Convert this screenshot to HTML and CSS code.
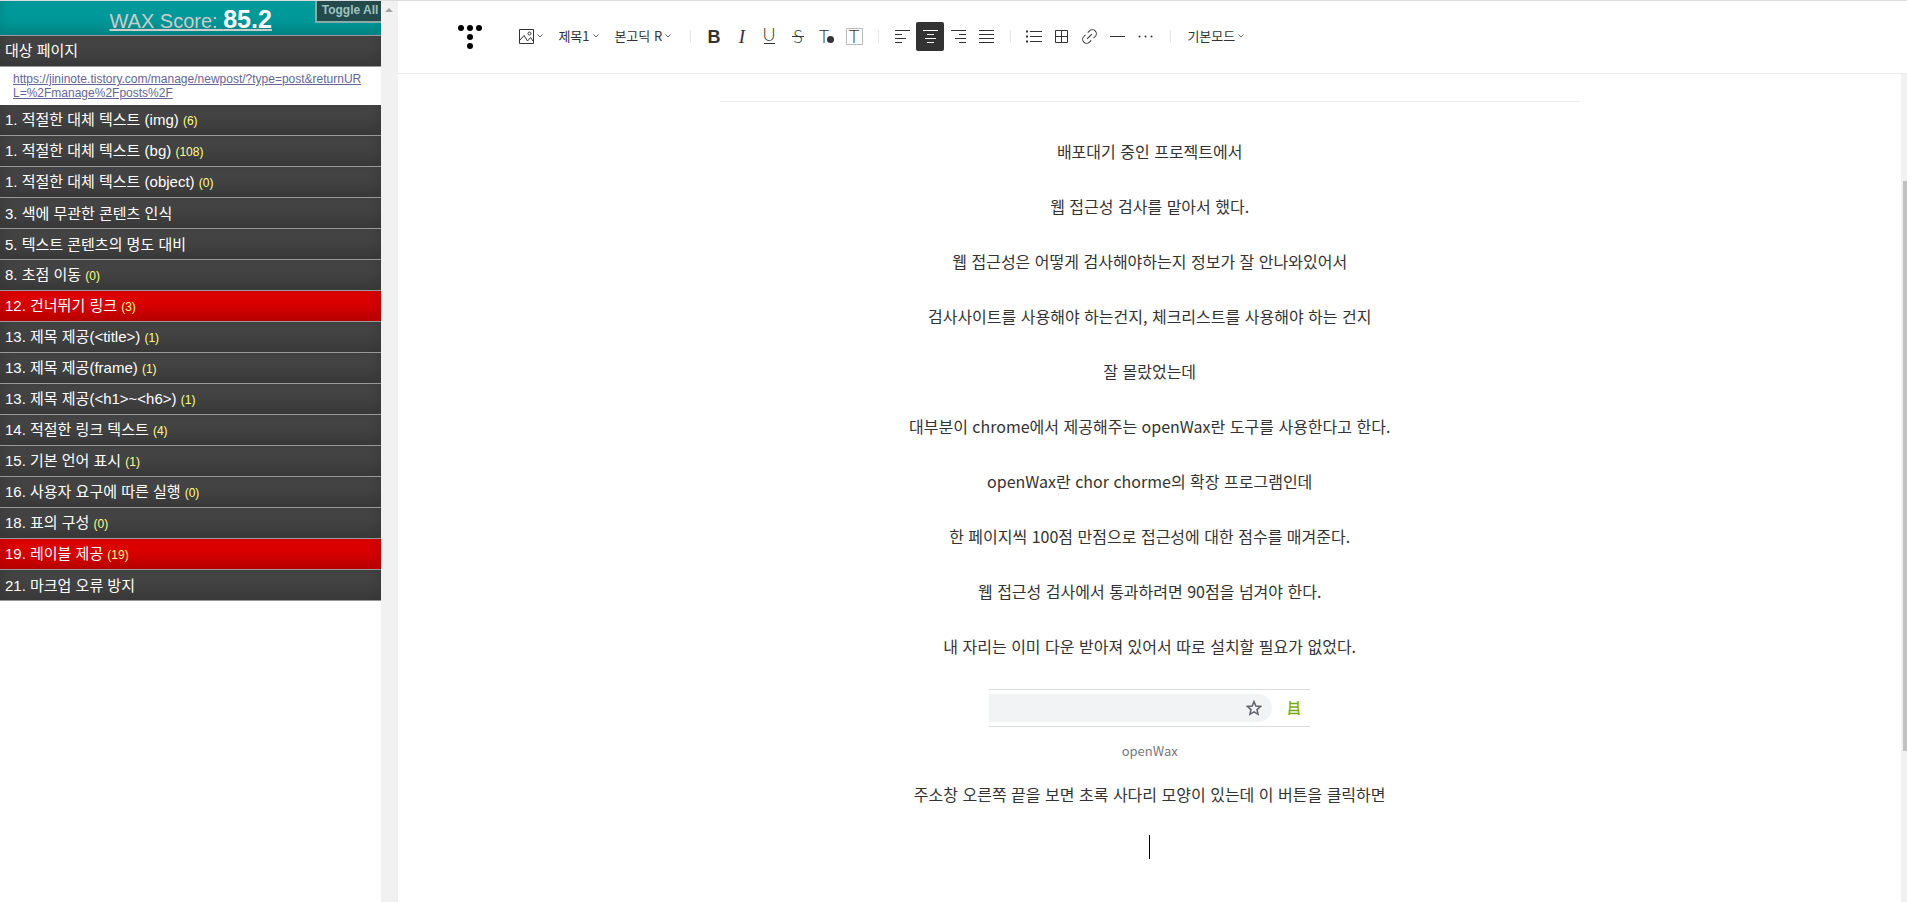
FILE: index.html
```html
<!DOCTYPE html>
<html lang="ko">
<head>
  <meta charset="UTF-8">
  <meta name="viewport" content="width=device-width, initial-scale=1.0">
  <title>글쓰기</title>
  <link rel="stylesheet" href="styles.css">
</head>
<body>
<aside class="wax">
  <header class="wax-score">
    <a href="#score">WAX Score: <strong>85.2</strong></a>
    <button type="button" class="toggle-all">Toggle All</button>
  </header>
  <h2 class="wax-target">대상 페이지</h2>
  <p class="wax-url"><a href="#page">https://jininote.tistory.com/manage/newpost/?type=post&amp;returnURL=%2Fmanage%2Fposts%2F</a></p>
  <ul class="wax-list">
    <li><button type="button">1. 적절한 대체 텍스트 (img) <em>(6)</em></button></li>
    <li><button type="button">1. 적절한 대체 텍스트 (bg) <em>(108)</em></button></li>
    <li><button type="button">1. 적절한 대체 텍스트 (object) <em>(0)</em></button></li>
    <li><button type="button">3. 색에 무관한 콘텐츠 인식</button></li>
    <li><button type="button">5. 텍스트 콘텐츠의 명도 대비</button></li>
    <li><button type="button">8. 초점 이동 <em>(0)</em></button></li>
    <li><button type="button" class="fail">12. 건너뛰기 링크 <em>(3)</em></button></li>
    <li><button type="button">13. 제목 제공(&lt;title&gt;) <em>(1)</em></button></li>
    <li><button type="button">13. 제목 제공(frame) <em>(1)</em></button></li>
    <li><button type="button">13. 제목 제공(&lt;h1&gt;~&lt;h6&gt;) <em>(1)</em></button></li>
    <li><button type="button">14. 적절한 링크 텍스트 <em>(4)</em></button></li>
    <li><button type="button">15. 기본 언어 표시 <em>(1)</em></button></li>
    <li><button type="button">16. 사용자 요구에 따른 실행 <em>(0)</em></button></li>
    <li><button type="button">18. 표의 구성 <em>(0)</em></button></li>
    <li><button type="button" class="fail">19. 레이블 제공 <em>(19)</em></button></li>
    <li><button type="button">21. 마크업 오류 방지</button></li>
  </ul>
</aside>
<div class="side-scroll">
  <svg width="17" height="17" viewBox="0 0 17 17"><path d="M4 11h8L8 7z" fill="#a3a3a3"/></svg>
</div>

<main class="editor">
  <div class="toolbar">
    <a href="#home" class="logo" aria-label="Tistory">
      <svg width="24" height="29" viewBox="0 0 24 29">
        <circle cx="3" cy="6" r="3"/><circle cx="12" cy="6" r="3"/><circle cx="21" cy="6" r="3"/>
        <circle cx="12" cy="15" r="3"/><circle cx="12" cy="24" r="3"/>
      </svg>
    </a>

    <button type="button" class="drop" aria-label="첨부">
      <svg width="15" height="15" viewBox="0 0 15 15" class="line">
        <path d="M.5.5h14v14H.5zM1 11l4-4.500 3.500 5.500 3-3.500L14 12"/><circle cx="10.500" cy="4.500" r="1.500"/>
      </svg>
      <svg class="chevron" width="6" height="4" viewBox="0 0 6 4"><path d="M.5.5L3 3 5.500.5"/></svg>
    </button>
    <label class="drop">
      <select aria-label="문단 모양"><option>제목1</option></select>
      <svg class="chevron" width="6" height="4" viewBox="0 0 6 4"><path d="M.5.5L3 3 5.500.5"/></svg>
    </label>
    <label class="drop">
      <select aria-label="글꼴"><option>본고딕 R</option></select>
      <svg class="chevron" width="6" height="4" viewBox="0 0 6 4"><path d="M.5.5L3 3 5.500.5"/></svg>
    </label>

    <span class="divider"></span>
    <button type="button" class="tool" aria-label="굵게">
      <svg width="28" height="29" viewBox="0 0 28 29"><text class="bold" x="14" y="21">B</text></svg>
    </button>
    <button type="button" class="tool" aria-label="기울임">
      <svg width="28" height="29" viewBox="0 0 28 29"><text class="italic" x="14" y="21">I</text></svg>
    </button>
    <button type="button" class="tool" aria-label="밑줄">
      <svg width="28" height="29" viewBox="0 0 28 29" class="line"><text class="thin" x="13" y="19">U</text><path d="M8 21.500h11"/></svg>
    </button>
    <button type="button" class="tool" aria-label="취소선">
      <svg width="28" height="29" viewBox="0 0 28 29" class="line"><text class="thin" x="14" y="21">S</text><path d="M8 14.500h12"/></svg>
    </button>
    <button type="button" class="tool" aria-label="글자색">
      <svg width="28" height="29" viewBox="0 0 28 29"><text class="thin" x="12" y="21">T</text><circle cx="18.500" cy="17.500" r="3.500" fill="#333"/></svg>
    </button>
    <button type="button" class="tool" aria-label="배경색">
      <svg width="28" height="29" viewBox="0 0 28 29"><path d="M6.500 6.500h16v16h-16z" fill="none" stroke="#bbb"/><text class="thin" x="14" y="21">T</text></svg>
    </button>

    <span class="divider"></span>
    <button type="button" class="tool" aria-label="왼쪽 정렬">
      <svg width="28" height="29" viewBox="0 0 28 29" class="line"><path d="M7 8.500h15M7 12.500h7M7 16.500h11M7 20.500h7"/></svg>
    </button>
    <button type="button" class="tool on" aria-label="가운데 정렬" aria-pressed="true">
      <svg width="28" height="29" viewBox="0 0 28 29" class="line"><path d="M7 8.500h15M11 12.500h7M9 16.500h11M11 20.500h7"/></svg>
    </button>
    <button type="button" class="tool" aria-label="오른쪽 정렬">
      <svg width="28" height="29" viewBox="0 0 28 29" class="line"><path d="M7 8.500h15M15 12.500h7M11 16.500h11M15 20.500h7"/></svg>
    </button>
    <button type="button" class="tool" aria-label="양쪽 정렬">
      <svg width="28" height="29" viewBox="0 0 28 29" class="line"><path d="M7 8.500h15M7 12.500h15M7 16.500h15M7 20.500h15"/></svg>
    </button>

    <span class="divider"></span>
    <button type="button" class="tool" aria-label="목록">
      <svg width="28" height="29" viewBox="0 0 28 29" class="line"><path d="M10 9.500h12M10 14.500h12M10 19.500h12"/><path stroke-width="2" d="M6 9.500h2M6 14.500h2M6 19.500h2"/></svg>
    </button>
    <button type="button" class="tool" aria-label="표">
      <svg width="28" height="29" viewBox="0 0 28 29" class="line"><path d="M7.500 8.500h12v12h-12zM13.500 8v13M7 14.500h13"/></svg>
    </button>
    <button type="button" class="tool" aria-label="링크">
      <svg width="28" height="29" viewBox="0 0 28 29" class="line">
        <g transform="rotate(-45 13.500 14.500)"><path d="M12 10.500H9.500a4 4 0 0 0 0 8H12M15 10.500h2.500a4 4 0 0 1 0 8H15M10 14.500h7"/></g>
      </svg>
    </button>
    <button type="button" class="tool" aria-label="구분선">
      <svg width="28" height="29" viewBox="0 0 28 29" class="line"><path d="M6 14.500h15"/></svg>
    </button>
    <button type="button" class="tool" aria-label="더보기">
      <svg width="28" height="29" viewBox="0 0 28 29"><g fill="#333"><circle cx="7.500" cy="14.500" r="1"/><circle cx="13.500" cy="14.500" r="1"/><circle cx="19.500" cy="14.500" r="1"/></g></svg>
    </button>

    <span class="divider"></span>
    <label class="drop mode">
      <select aria-label="편집 모드"><option>기본모드</option></select>
      <svg class="chevron" width="6" height="4" viewBox="0 0 6 4"><path d="M.5.5L3 3 5.500.5"/></svg>
    </label>
  </div>

  <div class="document">
    <article class="post">
      <hr>
      <p>배포대기 중인 프로젝트에서</p>
      <p>웹 접근성 검사를 맡아서 했다.</p>
      <p>웹 접근성은 어떻게 검사해야하는지 정보가 잘 안나와있어서</p>
      <p>검사사이트를 사용해야 하는건지, 체크리스트를 사용해야 하는 건지</p>
      <p>잘 몰랐었는데</p>
      <p>대부분이 chrome에서 제공해주는 openWax란 도구를 사용한다고 한다.</p>
      <p>openWax란 chor chorme의 확장 프로그램인데</p>
      <p>한 페이지씩 100점 만점으로 접근성에 대한 점수를 매겨준다.</p>
      <p>웹 접근성 검사에서 통과하려면 90점을 넘겨야 한다.</p>
      <p>내 자리는 이미 다운 받아져 있어서 따로 설치할 필요가 없었다.</p>
      <figure>
        <div class="browser-bar">
          <div class="address">
            <svg width="16" height="16" viewBox="0 0 16 16"><path d="M8 1.500l1.800 4.500 4.900.4-3.700 3.200 1.100 4.700L8 11.800l-4.100 2.500L5 9.600 1.300 6.400 6.200 6z" fill="none" stroke="#5f6368" stroke-width="1.500"/></svg>
          </div>
          <svg width="14" height="16" viewBox="0 0 14 16">
            <path d="M3 1v6l-1 8M11 1v6l1 8" fill="none" stroke="#9acb35" stroke-width="2"/>
            <path d="M3 3.500h8M3 7h8M2 10.500h10M2 13.500h10" fill="none" stroke="#74a51c" stroke-width="1.500"/>
          </svg>
        </div>
        <figcaption>openWax</figcaption>
      </figure>
      <p>주소창 오른쪽 끝을 보면 초록 사다리 모양이 있는데 이 버튼을 클릭하면</p>
      <p><span class="caret"></span></p>
    </article>
    <div class="doc-scroll"><div class="thumb"></div></div>
  </div>
</main>
</body>
</html>
```
FILE: styles.css
```css
* {
  box-sizing: border-box;
}

body {
  margin: 0;
  height: 100vh;
  display: flex;
  overflow: hidden;
  border-top: 1px solid #dadce0;
  background: #fff;
  color: #333;
  font-family: "Noto Sans CJK KR", "Noto Sans CJK SC", sans-serif;
}

button,
select {
  margin: 0;
  padding: 0;
  border: 0;
  background: none;
  color: inherit;
  font: inherit;
  cursor: pointer;
}

svg {
  display: block;
}

/* openWAX panel */
.wax {
  flex: 0 0 20%;
  font-family: "Liberation Sans", "Noto Sans CJK KR", "Noto Sans CJK SC", sans-serif;
}

.wax-score {
  position: relative;
  height: 35px;
  padding-top: 4px;
  border-bottom: 1px solid #999;
  background: #099;
  box-shadow: inset 0 -8px 12px rgba(0, 0, 0, 0.15);
  text-align: center;
  font-size: 20px;
  line-height: 29px;
}

.wax-score a {
  color: #ccc;
}

.wax-score strong {
  color: #fff;
  font-size: 25px;
}

.toggle-all {
  position: absolute;
  top: 0;
  right: 0;
  height: 22px;
  padding: 0 3px 2px 5px;
  border: 2px solid #8aa;
  border-width: 0 0 2px 2px;
  background: #244a4c;
  color: #9cc4c0;
  font-size: 12px;
  font-weight: bold;
  line-height: 18px;
}

.wax-target,
.wax-list button {
  display: block;
  width: 100%;
  height: 31px;
  margin: 0;
  padding: 0 5px;
  border-bottom: 1px solid #999;
  background: #444;
  box-shadow: inset 0 -8px 16px rgba(0, 0, 0, 0.2);
  color: #fff;
  font-size: 15px;
  font-weight: normal;
  line-height: 29px;
  text-align: left;
}

.wax-list .fail {
  background: #d00;
}

.wax-url {
  margin: 0;
  padding: 5px 16px 5px 13px;
  font-size: 12px;
  line-height: 14px;
  word-break: break-all;
}

.wax-url a {
  color: #669;
}

.wax-list {
  margin: 0;
  padding: 0;
  list-style: none;
}

.wax-list em {
  color: #ff8;
  font-size: 12px;
  font-style: normal;
}

.side-scroll {
  flex: 0 0 17px;
  background: #f1f1f1;
}

/* editor */
.editor {
  flex: 1;
  min-width: 0;
  display: flex;
  flex-direction: column;
}

.toolbar {
  display: flex;
  align-items: center;
  height: 73px;
  padding: 0 0 2px 60px;
  border-bottom: 1px solid #ebebeb;
  font-size: 13px;
}

.logo {
  margin-right: 37px;
}

.drop {
  display: flex;
  align-items: center;
  gap: 3px;
  margin-right: 15px;
}

.drop select {
  appearance: none;
  line-height: 20px;
}

.drop.mode {
  margin-left: 7px;
}

.chevron {
  fill: none;
  stroke: #666;
}

.divider {
  width: 1px;
  height: 13px;
  margin: 0 9px 0 10px;
  background: #e6e6e6;
}

.drop + .divider {
  margin-left: 4px;
}

.tool {
  border-radius: 2px;
}

.tool.on {
  background: #333;
  color: #fff;
}

.line {
  fill: none;
  stroke: currentColor;
}

.tool text {
  fill: #333;
  stroke: none;
  text-anchor: middle;
}

.bold {
  font: bold 18px "Liberation Sans", sans-serif;
}

.italic {
  font: italic 19px "Liberation Serif", serif;
}

.thin {
  font: 300 18px Lato, sans-serif;
}

.document {
  flex: 1;
  min-height: 0;
  display: flex;
}

.post {
  flex: 1;
  padding-top: 27px;
  font-size: 16px;
  line-height: 28px;
  text-align: center;
}

.post hr {
  max-width: 860px;
  margin: 0 auto 35px;
  border: 0;
  border-top: 1px solid #ebebeb;
}

.post p {
  margin: 0 0 27px;
}

.post figure {
  width: 321px;
  margin: 29px auto 19px;
}

.browser-bar {
  display: flex;
  align-items: center;
  gap: 15px;
  height: 38px;
  border: 1px solid #dadce0;
  border-width: 1px 0;
}

.address {
  display: flex;
  align-items: center;
  justify-content: flex-end;
  width: 283px;
  height: 28px;
  padding-right: 10px;
  border-radius: 0 14px 14px 0;
  background: #f1f3f4;
}

.post figcaption {
  margin-top: 14px;
  color: #777;
  font-size: 13px;
  line-height: 20px;
}

.caret {
  display: inline-block;
  width: 1px;
  height: 24px;
  background: #000;
  vertical-align: top;
}

.doc-scroll {
  flex: 0 0 6px;
  padding: 107px 0 0 2px;
  background: #f1f1f1;
}

.doc-scroll .thumb {
  height: 79%;
  background: #c1c1c1;
}
```
